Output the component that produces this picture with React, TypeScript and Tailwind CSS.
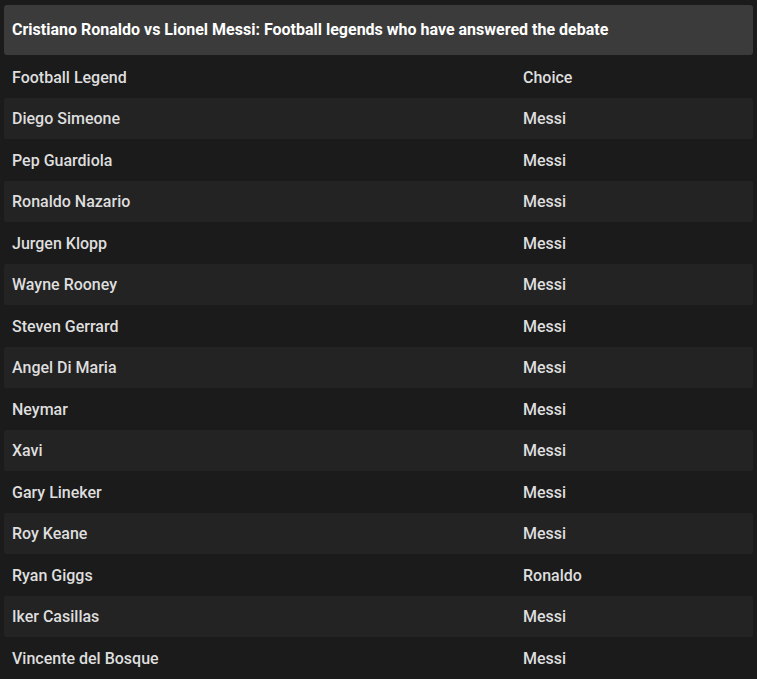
import React from 'react';

const rows: [string, string][] = [
  ['Football Legend', 'Choice'],
  ['Diego Simeone', 'Messi'],
  ['Pep Guardiola', 'Messi'],
  ['Ronaldo Nazario', 'Messi'],
  ['Jurgen Klopp', 'Messi'],
  ['Wayne Rooney', 'Messi'],
  ['Steven Gerrard', 'Messi'],
  ['Angel Di Maria', 'Messi'],
  ['Neymar', 'Messi'],
  ['Xavi', 'Messi'],
  ['Gary Lineker', 'Messi'],
  ['Roy Keane', 'Messi'],
  ['Ryan Giggs', 'Ronaldo'],
  ['Iker Casillas', 'Messi'],
  ['Vincente del Bosque', 'Messi'],
];

const App: React.FC = () => {
  return (
    <div className="min-h-screen bg-[#1b1b1b] px-1 pt-[5px] font-['Roboto',sans-serif]">
      <div className="flex h-[50px] items-center rounded-[3px] bg-[#3b3b3b] px-2">
        <h2 className="text-[16px] font-bold text-white">
          Cristiano Ronaldo vs Lionel Messi: Football legends who have answered the debate
        </h2>
      </div>
      <div className="mt-px">
        {rows.map(([name, choice], i) => (
          <div
            key={name}
            className={`grid h-[41.5px] grid-cols-[511px_1fr] items-center rounded-[2px] px-2 pt-[2px] text-[16px] font-medium text-[#dedede] ${
              i % 2 === 1 ? 'bg-[#232323]' : ''
            }`}
          >
            <span>{name}</span>
            <span>{choice}</span>
          </div>
        ))}
      </div>
    </div>
  );
};

export default App;
